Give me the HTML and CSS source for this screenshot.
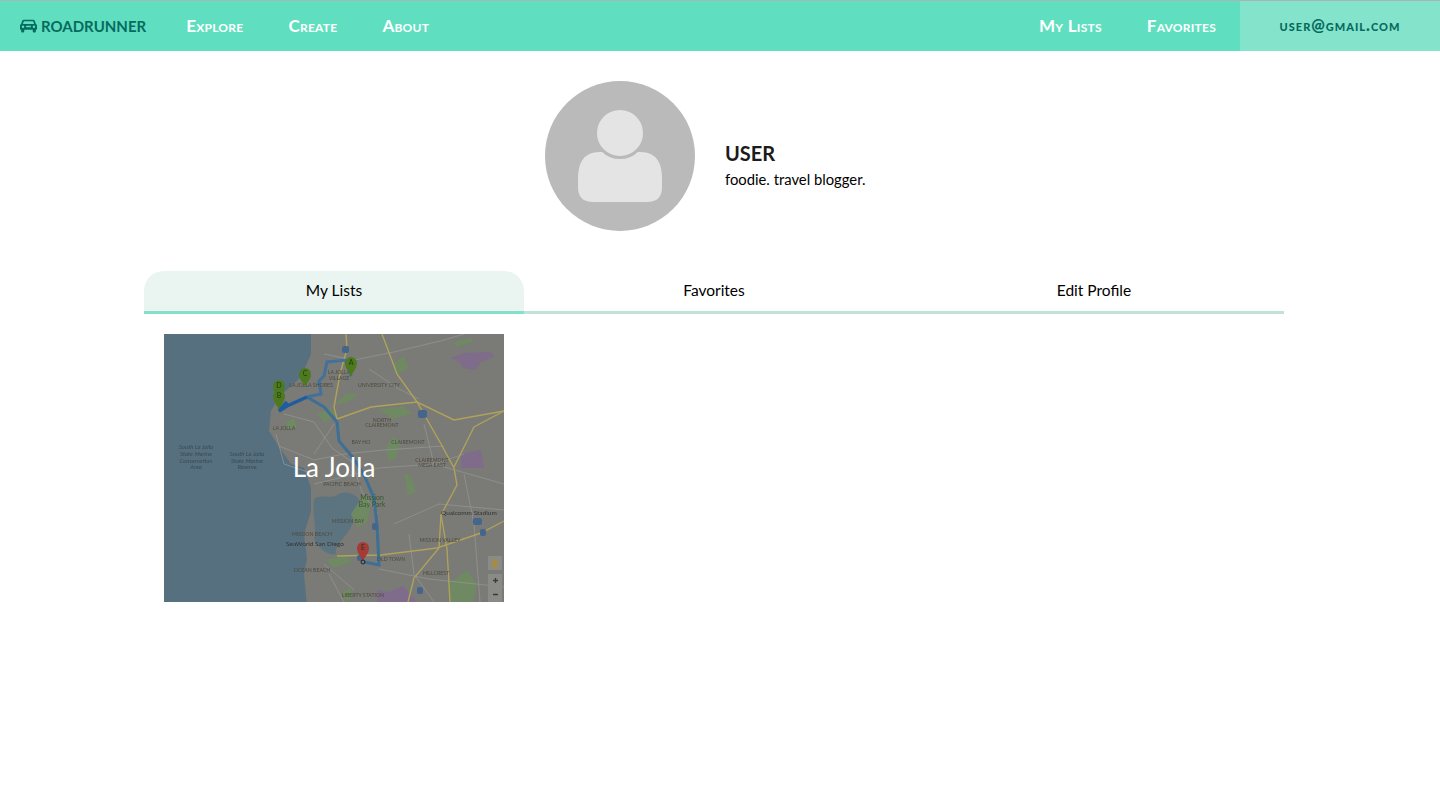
FILE: index.html
```html
<!DOCTYPE html>
<html lang="en">
<head>
  <meta charset="UTF-8" />
  <title>Roadrunner</title>
  <link rel="stylesheet" href="styles.css">
</head>
<body>
  <nav class="navbar">
    <a class="brand" href="#">
      <svg class="brand-icon" viewBox="0 0 18 14">
        <path d="M4.2 0.3h9.6c1 0 1.7.6 2 1.4l1 3.1c.7.4 1.2 1.1 1.2 2v3.4c0 .5-.3.8-.7.8h-.5v1.6c0 .8-.6 1.3-1.3 1.3h-.7c-.7 0-1.3-.5-1.3-1.3v-1.6H4.5v1.6c0 .8-.6 1.3-1.3 1.3h-.7c-.7 0-1.3-.5-1.3-1.3v-1.6H.7c-.4 0-.7-.3-.7-.8V6.800c0-.9.5-1.600 1.200-2l1-3.100c.3-.8 1-1.400 2-1.400zM4.500 2c-.3 0-.5.2-.6.400L3.100 4.800h11.800l-.8-2.400c-.1-.2-.3-.4-.6-.4zM3.200 6.400a1.300 1.300 0 1 0 0 2.600 1.300 1.300 0 0 0 0-2.600zm11.600 0a1.300 1.300 0 1 0 0 2.600 1.300 1.300 0 0 0 0-2.600zM6.500 6.800v1.400h5V6.800z" fill-rule="evenodd"/>
      </svg>
      ROADRUNNER
    </a>
    <a class="nav-link" href="#">Explore</a>
    <a class="nav-link" href="#">Create</a>
    <a class="nav-link" href="#">About</a>
    <div class="nav-right">
      <a class="nav-link" href="#">My Lists</a>
      <a class="nav-link" href="#">Favorites</a>
      <a class="nav-user" href="#">user@gmail.com</a>
    </div>
  </nav>

  <div class="container">
    <section class="profile">
      <svg class="avatar" viewBox="0 0 150 150">
        <circle cx="75" cy="75" r="75" fill="#bababa"/>
        <path d="M33 98c0-14 4-27 22-27h40c18 0 22 13 22 27v8c0 10-5 15-15 15H48c-10 0-15-5-15-15z" fill="#e4e4e4"/>
        <circle cx="75" cy="52" r="24.500" fill="#e4e4e4" stroke="#bababa" stroke-width="3"/>
      </svg>
      <div class="profile-info">
        <h2 class="profile-name">USER</h2>
        <p class="profile-bio">foodie. travel blogger.</p>
      </div>
    </section>

    <div class="tabs">
      <a class="tab active" href="#">My Lists</a>
      <a class="tab" href="#">Favorites</a>
      <a class="tab" href="#">Edit Profile</a>
    </div>

    <div class="lists">
      <a class="list-card" href="#">
        <svg class="map" viewBox="0 0 340 268">
          <rect width="340" height="268" fill="#56707f"/>
          <g class="map-base">
            <!-- land -->
            <path d="M147 -5L147 20 137 43 115 63 107 77 105 97 115 113 127 130 140 134 147 154 147 177 140 200 143 224 140 240 143 273H345V-5z" fill="#7a7a76"/>
            <!-- mission bay -->
            <path d="M150 166C152 160 165 164 172 162 180 155 190 160 195 165 197 175 190 185 186 195 180 205 170 212 172 220 165 222 155 216 150 205 153 195 148 180 150 166z" fill="#5b7480"/>
            <!-- parks -->
            <g fill="#6f8a62">
              <path d="M153 80l14-6 5 8-12 6z"/>
              <path d="M172 70c5-8 12-12 22-10-4 6-14 10-22 10z"/>
              <path d="M215 75l25-3 8 8-20 5z"/>
              <path d="M222 112l8-10 6 6-4 16-8 4z"/>
              <path d="M230 30l10-8 4 12-10 6z"/>
              <path d="M122 88l8-4 3 10-10 2z"/>
              <path d="M195 168l6-8 6 10-4 18-10 6-6-14z"/>
              <path d="M240 138l8 6 4 14-8 4z"/>
              <path d="M162 226l20-4 6 6-18 6z"/>
              <path d="M290 8l16-4 4 3-18 6z"/>
              <path d="M285 250l18-14 10 14-4 18h-22z"/>
              <path d="M178 258l8-4 4 8-8 6z"/>
            </g>
            <!-- purple areas -->
            <g fill="#7f6c8b">
              <path d="M287 24l13-5 26-1 5 4-14 6-6 8-12-2-4-6z"/>
              <path d="M297 120l20-4 3 18h-23z"/>
              <path d="M213 256l12 2 14-6 14 16h-40z"/>
            </g>
            <!-- small roads -->
            <g fill="none" stroke="#939390" stroke-width="0.800">
              <path d="M120 80l30 8 18 26 20 14 10 30 16 22"/>
              <path d="M160 20l30 6 40-8 50-12 20-6"/>
              <path d="M205 35l30 20 20 10"/>
              <path d="M150 120l20-30"/>
              <path d="M115 112l35 14 30-6 40-4 60-4"/>
              <path d="M150 150l25-6 40-10 55-4 70 20"/>
              <path d="M160 230l30 26"/>
              <path d="M215 235l50 10 75 8"/>
              <path d="M230 190l45-20 65 6"/>
              <path d="M300 140l10 50 6 78"/>
              <path d="M112 100l8 30 30 10"/>
              <path d="M260 90l10 40 30-10"/>
              <path d="M245 200l5 40 20 28"/>
              <path d="M165 240l15 28"/>
            </g>
            <!-- highways -->
            <g fill="none" stroke="#b0a25a" stroke-width="1.400">
              <path d="M182 0L183 15 176 40 170 73 173 85 207 73 253 68 290 86 340 77"/>
              <path d="M218 0L233 40 253 68 277 110 290 134 293 151 277 181 275 214 250 244 244 268"/>
              <path d="M173 222L217 221 273 214 317 199 340 187"/>
              <path d="M340 77L310 93 290 133"/>
              <path d="M277 181L283 215 286 268"/>
            </g>
            <!-- route -->
            <path d="M187 42L183 26 163 28 160 42 155 47 157 60 143 63" fill="none" stroke="#41719c" stroke-width="3"/>
            <path d="M143 63L160 73 173 88 175 107 190 125 200 141 210 164 213 191 215 231 200 228" fill="none" stroke="#3d6f97" stroke-width="3"/>
            <path d="M143 63L123 72 115 77 123 68" fill="none" stroke="#1f5ca0" stroke-width="3.500"/>
            <!-- shields -->
            <g fill="#46658c">
              <rect x="178" y="12" width="7" height="7" rx="2"/>
              <rect x="254" y="76" width="9" height="8" rx="2"/>
              <rect x="208" y="189" width="6" height="7" rx="2"/>
              <rect x="193" y="221" width="6" height="6" rx="2"/>
              <rect x="309" y="184" width="9" height="7" rx="2"/>
              <rect x="316" y="195" width="6" height="7" rx="2"/>
              <rect x="253" y="253" width="6" height="7" rx="2"/>
            </g>
            <!-- map labels -->
            <text class="label-sea" x="32" y="115">South La Jolla</text>
            <text class="label-sea" x="32" y="122">State Marine</text>
            <text class="label-sea" x="32" y="129">Conservation</text>
            <text class="label-sea" x="32" y="135">Area</text>
            <text class="label-sea" x="83" y="122">South La Jolla</text>
            <text class="label-sea" x="83" y="129">State Marine</text>
            <text class="label-sea" x="83" y="135">Reserve</text>
            <text class="label-town" x="147" y="53">LA JOLLA SHORES</text>
            <text class="label-town" x="175" y="40">LA JOLLA</text>
            <text class="label-town" x="175" y="46">VILLAGE</text>
            <text class="label-town" x="215" y="53">UNIVERSITY CITY</text>
            <text class="label-town" x="218" y="88">NORTH</text>
            <text class="label-town" x="218" y="93">CLAIREMONT</text>
            <text class="label-town" x="197" y="110">BAY HO</text>
            <text class="label-town" x="244" y="110">CLAIREMONT</text>
            <text class="label-town" x="268" y="128">CLAIREMONT</text>
            <text class="label-town" x="268" y="133">MESA EAST</text>
            <text class="label-town" x="120" y="96">LA JOLLA</text>
            <text class="label-town" x="178" y="152">PACIFIC BEACH</text>
            <text class="label-town" x="184" y="189">MISSION BAY</text>
            <text class="label-town" x="148" y="202">MISSION BEACH</text>
            <text class="label-town" x="276" y="208">MISSION VALLEY</text>
            <text class="label-town" x="148" y="238">OCEAN BEACH</text>
            <text class="label-town" x="199" y="263">LIBERTY STATION</text>
            <text class="label-town" x="227" y="227">OLD TOWN</text>
            <text class="label-town" x="272" y="241">HILLCREST</text>
            <text class="label-park" x="208" y="166">Mission</text>
            <text class="label-park" x="208" y="173">Bay Park</text>
            <text class="label-poi" x="122" y="212">SeaWorld San Diego</text>
            <text class="label-poi" x="277" y="181">Qualcomm Stadium</text>
          </g>
          <!-- pins -->
          <g class="map-pins">
            <path d="M115 66c-1-4-6-8-6-14a6 6 0 0 1 12 0c0 6-5 10-6 14z" fill="#4e7a1f"/>
            <path d="M115 76c-1-4-6-8-6-14a6 6 0 0 1 12 0c0 6-5 10-6 14z" fill="#4e7a1f"/>
            <path d="M141 53c-1-4-6-7-6-13a6 6 0 0 1 12 0c0 6-5 9-6 13z" fill="#4e7a1f"/>
            <path d="M187 43c-1-5-6-8-6-14a6 6 0 0 1 12 0c0 6-5 9-6 14z" fill="#4e7a1f"/>
            <path d="M199 228c-1-5-6-8-6-14a6 6 0 0 1 12 0c0 6-5 9-6 14z" fill="#a53a38"/>
            <circle cx="199" cy="228" r="2" fill="none" stroke="#222" stroke-width="1"/>
            <text class="pin-letter" x="115" y="54">D</text>
            <text class="pin-letter" x="115" y="64">B</text>
            <text class="pin-letter" x="141" y="42">C</text>
            <text class="pin-letter" x="187" y="31">A</text>
            <text class="pin-letter" x="199" y="216">E</text>
          </g>
          <!-- map controls -->
          <rect x="324" y="222" width="14" height="14" fill="#8a8a87"/>
          <path d="M331 225a2 2 0 0 1 2 2l1 4-2 3h-2l-2-3 1-4a2 2 0 0 1 2-2z" fill="#a98b3c"/>
          <rect x="324" y="240" width="14" height="28" fill="#8a8a87"/>
          <path d="M329 246.500h5M331.500 244v5M329 260.500h5" stroke="#3a3a3a" stroke-width="1.300"/>
        </svg>
        <span class="list-title">La Jolla</span>
      </a>
    </div>
  </div>
</body>
</html>
```

FILE: styles.css
```css
body {
  margin: 0;
  background: #fff;
  color: #000;
  font-family: "Lato", "Open Sans", sans-serif;
}
a {
  text-decoration: none;
  color: inherit;
}
.navbar {
  display: flex;
  align-items: stretch;
  height: 50px;
  background: #5fdfc0;
  border-top: 1px solid #a9b5b1;
}
.brand {
  display: flex;
  align-items: center;
  gap: 4px;
  padding: 0 17.5px 0 20px;
  color: #066b5f;
  font-size: 15px;
  font-weight: 700;
}
.brand-icon {
  width: 17px;
  height: 14px;
  fill: #066b5f;
}
.nav-link {
  display: flex;
  align-items: center;
  padding: 0 22.5px 2px;
  color: #fff;
  font-size: 17px;
  font-variant: small-caps;
  font-weight: 700;
  letter-spacing: 0.25px;
}
.nav-right {
  display: flex;
  margin-left: auto;
}
.nav-user {
  display: flex;
  align-items: center;
  justify-content: center;
  width: 200px;
  margin-left: 1.5px;
  padding-bottom: 3px;
  background: #84e3cb;
  color: #066b5f;
  font-size: 16px;
  font-variant: small-caps;
  font-weight: 900;
  letter-spacing: 1px;
  text-transform: lowercase;
}
.container {
  width: 1140px;
  margin-left: 144px;
}
.profile {
  display: flex;
  align-items: center;
  justify-content: center;
  gap: 30px;
  padding: 30px 0 40px;
}
.avatar {
  width: 150px;
  height: 150px;
}
.profile-info {
  width: 158px;
  padding-top: 18px;
}
.profile-name {
  margin: 0 0 4px;
  color: #1c1c1c;
  font-size: 20px;
  font-weight: 700;
  line-height: 24px;
}
.profile-bio {
  margin: 0;
  font-size: 14.8px;
  line-height: 20px;
}
.tabs {
  display: flex;
}
.tab {
  flex: 1;
  height: 40px;
  line-height: 38px;
  text-align: center;
  font-size: 15.5px;
  border-bottom: 3px solid #bde4d6;
}
.tab.active {
  background: #eaf4f1;
  border-bottom-color: #84e0c6;
  border-radius: 20px 20px 0 0;
}
.lists {
  display: flex;
  padding: 20px;
}
.list-card {
  position: relative;
  display: flex;
  align-items: center;
  justify-content: center;
  width: 340px;
  height: 268px;
}
.map {
  display: block;
  width: 340px;
  height: 268px;
}
.map-base {
  filter: blur(0.4px);
}
.map-pins {
  filter: blur(0.3px);
}
.label-sea {
  fill: #3b4a54;
  font-size: 6px;
  font-style: italic;
  text-anchor: middle;
}
.label-town {
  fill: #4e4a3e;
  font-size: 5.2px;
  text-anchor: middle;
}
.label-park {
  fill: #35592c;
  font-size: 7px;
  text-anchor: middle;
}
.label-poi {
  fill: #333;
  font-size: 6.5px;
}
.pin-letter {
  fill: #26380f;
  font-size: 7px;
  text-anchor: middle;
}
.list-title {
  position: absolute;
  margin-bottom: 2px;
  color: #fff;
  font-size: 26px;
}
```
